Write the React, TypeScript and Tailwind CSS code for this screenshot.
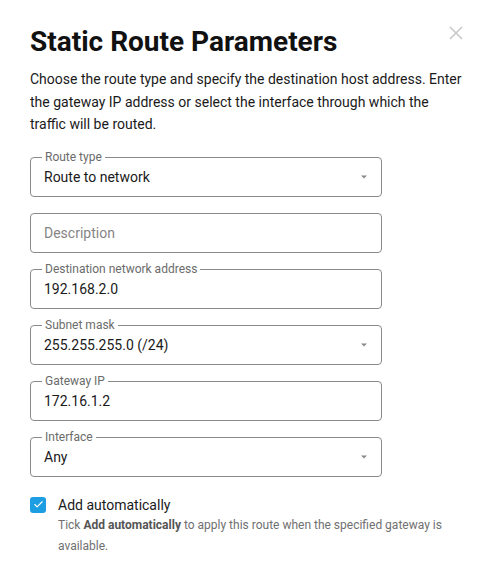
import { Check } from "lucide-react";

type Field = {
  label?: string;
  value?: string;
  placeholder?: string;
  select?: boolean;
};

const FIELDS: Field[] = [
  { label: "Route type", value: "Route to network", select: true },
  { placeholder: "Description" },
  { label: "Destination network address", value: "192.168.2.0" },
  { label: "Subnet mask", value: "255.255.255.0 (/24)", select: true },
  { label: "Gateway IP", value: "172.16.1.2" },
  { label: "Interface", value: "Any", select: true },
];

function OutlinedField({ label, value, placeholder, select }: Field) {
  return (
    <div className="relative h-10 w-[352px] rounded border border-[#8a8a8a] flex items-center pl-[13px] pr-3">
      {label && (
        <span className="absolute -top-[9px] left-[11px] bg-white px-[3px] text-xs leading-4 text-[#6b6b6b]">
          {label}
        </span>
      )}
      <span className={`flex-1 text-sm ${value ? "text-[#1a1a1a]" : "text-[#858585]"}`}>
        {value ?? placeholder}
      </span>
      {select && (
        <svg width="6" height="4" viewBox="0 0 6 4" className="mr-[2px]">
          <path d="M0 0.5h6L3 3.5z" fill="#8a8a8a" />
        </svg>
      )}
    </div>
  );
}

export default function App() {
  return (
    <div className="min-h-[570px] w-[498px] bg-white font-['Roboto',sans-serif]">
      <div className="relative px-[30px] pt-[24px]">
        {/* close */}
        <button className="absolute right-[35px] top-[26px]" aria-label="Close">
          <svg width="14" height="14" viewBox="0 0 14 14" stroke="#c8c8c8" strokeWidth="1.6">
            <path d="M1 1l12 12M13 1L1 13" />
          </svg>
        </button>

        <h1 className="text-[28px] font-bold leading-9 text-[#111]">Static Route Parameters</h1>
        <p className="mt-[8px] w-[438px] text-sm leading-[22.5px] text-[#1a1a1a]">
          Choose the route type and specify the destination host address. Enter the gateway IP
          address or select the interface through which the traffic will be routed.
        </p>

        <div className="mt-[21px] flex flex-col gap-4">
          {FIELDS.map((f, i) => (
            <OutlinedField key={i} {...f} />
          ))}
        </div>

        <div className="mt-[20px] flex gap-3">
          <span className="flex h-4 w-4 shrink-0 items-center justify-center rounded-[3px] bg-[#1d9ee2] text-white">
            <Check size={11} strokeWidth={2.5} />
          </span>
          <div>
            <div className="text-sm leading-4 text-[#1a1a1a]">Add automatically</div>
            <p className="mt-[2px] text-xs leading-[21px] text-[#707070]">
              Tick <b className="font-bold text-[#555]">Add automatically</b> to apply this route when the
              specified gateway is available.
            </p>
          </div>
        </div>
      </div>
    </div>
  );
}
